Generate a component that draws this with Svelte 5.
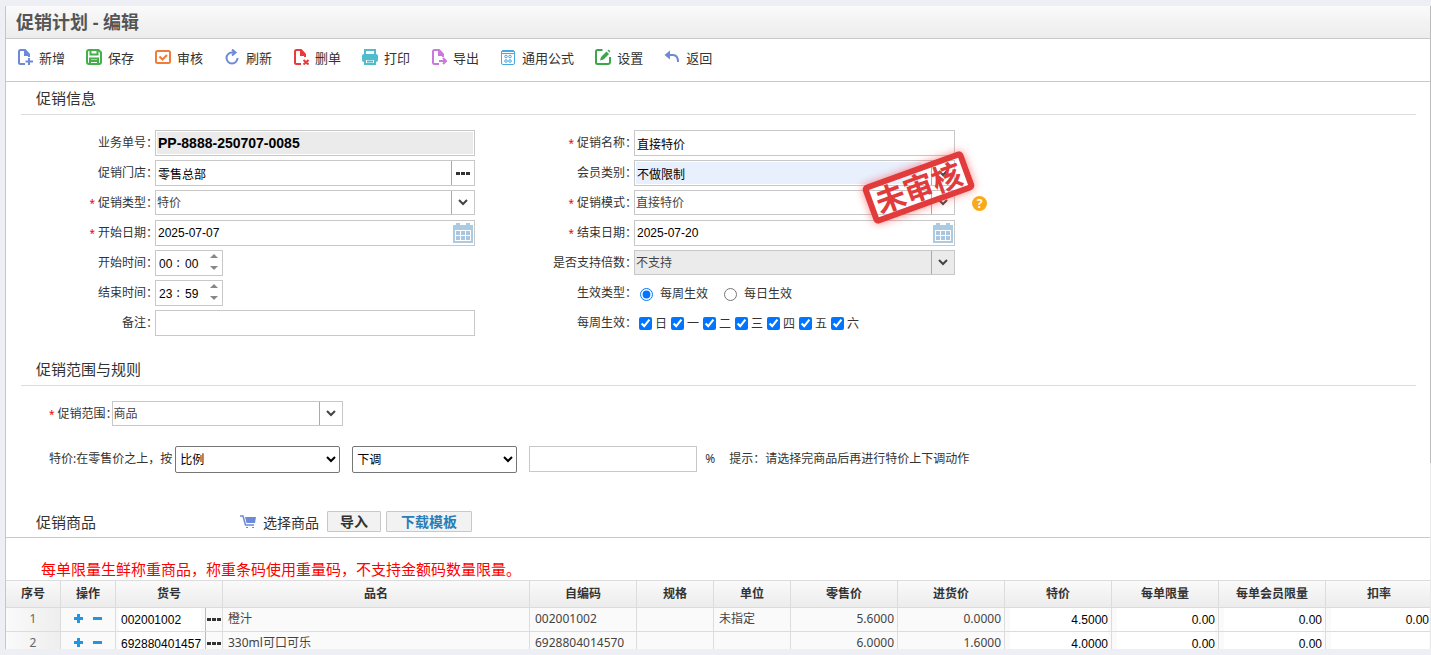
<script lang="ts">
  type Tool = { label: string; color: string; line?: string; fill?: string; width?: number };

  const tools: Tool[] = [
    { label: '新增', color: '#6d8ad8', line: 'M8 15H3.500Q2 15 2 13.500V2.500Q2 1 3.500 1H8l4 4.500V8', fill: 'M7 1h2l4 4.500V7H7zM11 9h2v2.500h3v2h-3V16h-2v-2.500H8.500v-2H11z', width: 2 },
    { label: '保存', color: '#45b04a', line: 'M1 3Q1 1 3 1h9.500L15 3.500V13q0 2-2 2H3q-2 0-2-2zM4.500 1v4.500h7V1M4 15V9.500h8V15M5 12h6', width: 2 },
    { label: '审核', color: '#ee7c3b', line: 'M2.500 2h11q1.500 0 1.500 1.500v9q0 1.500-1.500 1.500h-11Q1 14 1 12.500v-9Q1 2 2.500 2zM4.500 7.500l3 3 4.500-4.500', width: 2 },
    { label: '刷新', color: '#6d8ad8', line: 'M13.500 9a5.500 5.500 0 1 1-5.500-5.500h2.500M8 0.500l3.500 3-3.500 3', width: 2 },
    { label: '删单', color: '#e93a3c', line: 'M8 15H3.500Q2 15 2 13.500V2.500Q2 1 3.500 1H8l4 4.500V8M10.500 11l5 4.500M15.500 11l-5 4.500', fill: 'M7 1h2l4 4.500V7H7z', width: 2 },
    { label: '打印', color: '#4fbdcb', line: 'M3 5V1h10v4M3 10h10v5H3zM5 12.500h6', fill: 'M2 5h12q2 0 2 2v4q0 2-2 2h-1V9H3v4H2q-2 0-2-2V7q0-2 2-2z', width: 2 },
    { label: '导出', color: '#c978db', line: 'M8 15H3.500Q2 15 2 13.500V2.500Q2 1 3.500 1H8l4 4.500V8M8 12h6.500M12 9l3 3-3 3', fill: 'M7 1h2l4 4.500V7H7z', width: 2 },
    { label: '通用公式', color: '#46a9e2', line: 'M3 1.500h10q1.500 0 1.500 1.500v11q0 1.500-1.500 1.500H3q-1.500 0-1.500-1.500V3q0-1.500 1.500-1.500zM2 4.500h12M2 2.500h12M4.700 7.500a1.300 1.300 0 1 0 2.600 0a1.300 1.300 0 1 0-2.600 0M8.700 7.500a1.300 1.300 0 1 0 2.600 0a1.300 1.300 0 1 0-2.600 0M4.700 12a1.300 1.300 0 1 0 2.600 0a1.300 1.300 0 1 0-2.600 0M8.700 12a1.300 1.300 0 1 0 2.600 0a1.300 1.300 0 1 0-2.600 0', width: 1 },
    { label: '设置', color: '#3da64a', line: 'M7.500 1H2.500Q1 1 1 2.500v11Q1 15 2.500 15H13q2 0 2-2V8', fill: 'M11.500 2.500l2.500 2.500L8.500 10.500 5 11.500l1-3.500zM13.500 0.500l2 2-1 1-2-2z', width: 2 },
    { label: '返回', color: '#6d8ad8', line: 'M5 6h4q5 0 5 7', fill: 'M0.500 6L6 1.500v9z', width: 2 }
  ];

  const weekdays = ['日', '一', '二', '三', '四', '五', '六'];

  const columns = [
    { title: '序号', width: 55 },
    { title: '操作', width: 55 },
    { title: '货号', width: 107 },
    { title: '品名', width: 307 },
    { title: '自编码', width: 107 },
    { title: '规格', width: 77 },
    { title: '单位', width: 77 },
    { title: '零售价', width: 107 },
    { title: '进货价', width: 107 },
    { title: '特价', width: 107 },
    { title: '每单限量', width: 107 },
    { title: '每单会员限量', width: 107 },
    { title: '扣率', width: 107 }
  ];

  let rows = $state([
    { code: '002001002', name: '橙汁', selfCode: '002001002', spec: '', unit: '未指定', retail: '5.6000', cost: '0.0000', price: '4.5000', limit: '0.00', memberLimit: '0.00', rate: '0.00' },
    { code: '6928804014570', name: '330ml可口可乐', selfCode: '6928804014570', spec: '', unit: '', retail: '6.0000', cost: '1.6000', price: '4.0000', limit: '0.00', memberLimit: '0.00', rate: '' }
  ]);

  let effect = $state('week');
</script>

{#snippet arrow()}
  <svg class="arrow" viewBox="0 0 10 7" aria-hidden="true"><path d="M1 1l4 4 4-4" /></svg>
{/snippet}

{#snippet dots()}
  <svg class="dots" viewBox="0 0 14 3" aria-hidden="true"><path d="M0 0h4v3H0zM5 0h4v3H5zM10 0h4v3h-4z" /></svg>
{/snippet}

{#snippet combo(id: string, value: string, disabled = false)}
  <div class="box combo" class:disabled>
    <select {id} {disabled}><option>{value}</option></select>
    <span class="side">{@render arrow()}</span>
  </div>
{/snippet}

{#snippet dateBox(id: string, value: string)}
  <div class="box">
    <input {id} type="text" {value} />
    <button class="calendar" type="button" aria-label="选择日期">
      <svg viewBox="0 0 20 20">
        <path fill="#a9cbe6" d="M0 2h3V0h4v2h6V0h4v2h3v18H0z" />
        <path fill="#fff" d="M2 7h16v11H2z" />
        <path fill="#a9c6e0" d="M3 8h4v4H3zM8 8h4v4H8zM13 8h4v4h-4zM3 13h4v4H3zM8 13h4v4H8zM13 13h4v4h-4z" />
      </svg>
    </button>
  </div>
{/snippet}

{#snippet timeBox(id: string, hour: string, minute: string)}
  <div class="box time">
    <input {id} type="text" value={hour} />
    <span class="colon">:</span>
    <input type="text" value={minute} aria-label="分钟" />
    <span class="spin">
      <button type="button" aria-label="增加"><svg viewBox="0 0 8 4"><path d="M0 4l4-4 4 4z" /></svg></button>
      <button type="button" aria-label="减少"><svg viewBox="0 0 8 4"><path d="M0 0l4 4 4-4z" /></svg></button>
    </span>
  </div>
{/snippet}

{#snippet caption(id: string, text: string, required = false)}
  <label class="caption" for={id}>{#if required}<i>*</i>{/if}{text}：</label>
{/snippet}

<div class="page">
  <main class="panel">
    <header class="title"><h1>促销计划 - 编辑</h1></header>

    <nav class="toolbar">
      {#each tools as tool}
        <button type="button" style:color={tool.color}>
          <svg viewBox="0 0 16 16" aria-hidden="true">
            {#if tool.fill}<path d={tool.fill} fill="currentColor" />{/if}
            <path d={tool.line} fill="none" stroke="currentColor" stroke-width={tool.width} />
          </svg>
          <span>{tool.label}</span>
        </button>
      {/each}
    </nav>

    <h2 class="section">促销信息</h2>
    <form class="form">
      <div class="fields">
        {@render caption('billNo', '业务单号')}
        <div class="box disabled inset"><input id="billNo" class="bill" type="text" value="PP-8888-250707-0085" readonly /></div>
        {@render caption('shop', '促销门店')}
        <div class="box">
          <input id="shop" type="text" value="零售总部" />
          <button class="side" type="button" aria-label="选择门店">{@render dots()}</button>
        </div>
        {@render caption('kind', '促销类型', true)}
        {@render combo('kind', '特价')}
        {@render caption('startDate', '开始日期', true)}
        {@render dateBox('startDate', '2025-07-07')}
        {@render caption('startTime', '开始时间')}
        {@render timeBox('startTime', '00', '00')}
        {@render caption('endTime', '结束时间')}
        {@render timeBox('endTime', '23', '59')}
        {@render caption('remark', '备注')}
        <div class="box"><input id="remark" type="text" /></div>
      </div>

      <div class="fields right">
        {@render caption('promoName', '促销名称', true)}
        <div class="box"><input id="promoName" type="text" value="直接特价" /></div>
        {@render caption('member', '会员类别')}
        <div class="box member">
          <input id="member" type="text" value="不做限制" />
          <button class="side" type="button" aria-label="展开">{@render arrow()}</button>
        </div>
        {@render caption('mode', '促销模式', true)}
        <div class="with-help">
          {@render combo('mode', '直接特价')}
          <button class="help" type="button">?</button>
        </div>
        {@render caption('endDate', '结束日期', true)}
        {@render dateBox('endDate', '2025-07-20')}
        {@render caption('multiple', '是否支持倍数')}
        {@render combo('multiple', '不支持', true)}
        <span class="caption">生效类型：</span>
        <div class="choices radios">
          <label><input type="radio" name="effect" value="week" bind:group={effect} />每周生效</label>
          <label><input type="radio" name="effect" value="day" bind:group={effect} />每日生效</label>
        </div>
        <span class="caption">每周生效：</span>
        <div class="choices">
          {#each weekdays as day}
            <label><input type="checkbox" checked />{day}</label>
          {/each}
        </div>
        <div class="stamp">未审核</div>
      </div>
    </form>

    <h2 class="section">促销范围与规则</h2>
    <div class="rules">
      <div class="scope">
        {@render caption('scope', '促销范围', true)}
        {@render combo('scope', '商品')}
      </div>
      <div class="adjust">
        <label for="basis">特价:在零售价之上，按</label>
        <select id="basis"><option>比例</option><option>金额</option></select>
        <select aria-label="调整方向"><option>下调</option><option>上调</option></select>
        <div class="box amount"><input type="text" aria-label="调整幅度" /></div>
        <span class="percent">%</span>
        <span>提示：请选择完商品后再进行特价上下调动作</span>
      </div>
    </div>

    <div class="goods-bar">
      <h2>促销商品</h2>
      <button class="pick" type="button">
        <svg viewBox="0 0 16 14" aria-hidden="true">
          <path d="M0 1h3l2.500 9H14" fill="none" stroke="#6d8ad8" stroke-width="1.500" />
          <path d="M5 2h11l-1 6H6.500z" fill="#6d8ad8" />
          <path d="M6 12h2v1H6zM12 12h2v1h-2z" fill="#6d8ad8" />
        </svg>
        选择商品
      </button>
      <button class="btn" type="button">导入</button>
      <a class="btn link" href="#template">下载模板</a>
    </div>
    <p class="notice">每单限量生鲜称重商品，称重条码使用重量码，不支持金额码数量限量。</p>

    <div class="grid">
      <table>
        <colgroup>
          {#each columns as col}<col style:width="{col.width}px" />{/each}
        </colgroup>
        <thead>
          <tr>{#each columns as col}<th>{col.title}</th>{/each}</tr>
        </thead>
        <tbody>
          {#each rows as row, i}
            <tr>
              <td class="no">{i + 1}</td>
              <td class="ops">
                <button type="button" aria-label="添加行"><svg viewBox="0 0 9 9"><path d="M3 0h3v3h3v3H6v3H3V6H0V3h3z" /></svg></button>
                <button type="button" aria-label="删除行"><svg viewBox="0 0 9 9"><path d="M0 3h9v3H0z" /></svg></button>
              </td>
              <td class="code">
                <div>
                  <input type="text" bind:value={row.code} aria-label="货号" />
                  <button type="button" aria-label="选择货号">{@render dots()}</button>
                </div>
              </td>
              <td>{row.name}</td>
              <td>{row.selfCode}</td>
              <td>{row.spec}</td>
              <td>{row.unit}</td>
              <td class="num">{row.retail}</td>
              <td class="num">{row.cost}</td>
              <td class="edit"><input type="text" bind:value={row.price} aria-label="特价" /></td>
              <td class="edit"><input type="text" bind:value={row.limit} aria-label="每单限量" /></td>
              <td class="edit"><input type="text" bind:value={row.memberLimit} aria-label="每单会员限量" /></td>
              <td class="edit"><input type="text" bind:value={row.rate} aria-label="扣率" /></td>
            </tr>
          {/each}
        </tbody>
      </table>
    </div>
  </main>
  <div class="scroll"><div class="thumb"></div></div>
</div>

<style>
  :global(body) {
    margin: 0;
    background: #eeeff4;
  }

  .page {
    display: flex;
    height: 100vh;
    box-sizing: border-box;
    padding: 6px 0 6px 5px;
    overflow: hidden;
    font: 12px/18px 'Noto Sans', 'Noto Sans CJK SC', sans-serif;
    color: #333;
  }

  .page :is(input, select, button) {
    box-sizing: border-box;
    margin: 0;
    font-family: inherit;
    font-size: 12px;
  }

  button {
    padding: 0;
    border: 0;
    background: none;
    color: inherit;
    cursor: pointer;
  }

  svg {
    display: block;
    flex: none;
  }

  .panel {
    flex: 1;
    min-width: 0;
    overflow: hidden;
    background: #fff;
    border-left: 1px solid #c6c6c8;
  }

  .scroll {
    width: 1px;
    background: #eaeaea;
  }

  .thumb {
    height: 71%;
    background: #bbb;
  }

  h1,
  h2 {
    margin: 0;
    font-weight: normal;
  }

  .title {
    height: 32px;
    padding-left: 10px;
    border-bottom: 1px solid #c8c8c8;
    background: linear-gradient(#fafafa, #ececec);
  }

  h1 {
    font-size: 18px;
    font-weight: bold;
    line-height: 32px;
    color: #555;
  }

  .toolbar {
    display: flex;
    gap: 21px;
    height: 42px;
    padding-left: 11px;
    border-bottom: 1px solid #c8c8c8;
  }

  .toolbar button {
    display: flex;
    align-items: center;
    gap: 6px;
    height: 36px;
  }

  .toolbar svg {
    width: 16px;
    height: 16px;
  }

  .toolbar span {
    font-size: 13px;
    color: #333;
  }

  .section {
    height: 32px;
    margin: 0 14px 0 15px;
    padding-left: 15px;
    border-bottom: 1px solid #dcdcdc;
    font-size: 15px;
    line-height: 32px;
  }

  .form {
    display: flex;
    padding: 15px 0 13px;
  }

  .fields {
    position: relative;
    display: grid;
    grid-template-columns: 149px 320px;
    grid-auto-rows: 30px;
  }

  .fields.right {
    grid-template-columns: 159px 321px;
  }

  /* the full-width colon has an empty right half, which slides under the field */
  .caption {
    margin-right: -3px;
    line-height: 25px;
    text-align: right;
    white-space: nowrap;
  }

  .caption i {
    margin-right: 3px;
    font-style: normal;
    font-size: 10px;
    line-height: 1;
    color: #e00;
  }

  .box {
    position: relative;
    display: flex;
    height: 26px;
    box-sizing: border-box;
    border: 1px solid #c8c8c8;
    background: #fff;
  }

  .box input {
    flex: 1;
    min-width: 0;
    height: 24px;
    padding: 0 2px;
    border: 0;
    outline: 0;
    background: none;
    font-family: 'Liberation Sans', 'Noto Sans CJK SC', sans-serif;
    color: #000;
  }

  .box .bill {
    font-size: 14px;
    font-weight: bold;
  }

  .box.disabled {
    background: #ebebeb;
  }

  .inset {
    box-shadow: inset 0 0 0 1px #fff;
  }

  .combo {
    height: 25px;
  }

  .combo select {
    flex: 1;
    padding: 0 1px;
    border: 0;
    outline: 0;
    background: none;
    appearance: none;
    color: #444;
    opacity: 1;
  }

  .side {
    box-sizing: border-box;
    display: flex;
    align-items: center;
    justify-content: center;
    width: 23px;
    border-left: 1px solid #aaa;
  }

  .combo .side {
    pointer-events: none;
  }

  .arrow {
    width: 10px;
    height: 7px;
    fill: none;
    stroke: #444;
    stroke-width: 2;
  }

  .dots {
    width: 14px;
    height: 3px;
    fill: #333;
  }

  .calendar {
    width: 23px;
    padding: 2px;
  }

  .calendar svg {
    width: 20px;
    height: 20px;
  }

  .time {
    width: 68px;
  }

  .box.time input {
    flex: none;
    width: 18px;
    padding: 1px 0 0 3px;
  }

  .colon {
    width: 8px;
    line-height: 24px;
    text-align: center;
    color: #000;
  }

  .spin {
    display: flex;
    flex-direction: column;
    justify-content: space-between;
    margin-left: 10px;
    padding: 3px 0 5px;
  }

  .spin svg {
    width: 8px;
    height: 4px;
    fill: #888;
  }

  .member input {
    height: 22px;
    margin: 1px 10px 1px 1px;
    padding: 0 1px;
    background: #e8f0fe;
  }

  .with-help {
    position: relative;
  }

  .help {
    position: absolute;
    left: 338px;
    top: 6px;
    width: 15px;
    height: 15px;
    border-radius: 50%;
    background: #fba919;
    color: #fff;
    font-weight: bold;
    line-height: 15px;
  }

  .choices {
    display: flex;
    align-items: center;
    height: 27px;
    padding-left: 5px;
  }

  .choices label {
    display: flex;
    align-items: center;
    gap: 3px;
    width: 32px;
  }

  .choices input {
    width: 13px;
    height: 13px;
  }

  .radios {
    height: 28px;
    padding-left: 6px;
  }

  .radios label {
    gap: 7px;
    width: 84px;
  }

  .stamp {
    position: absolute;
    left: 390px;
    top: 37px;
    width: 107px;
    height: 41px;
    box-sizing: border-box;
    border: 6px solid #e23b3b;
    border-radius: 5px;
    box-shadow: 0 0 8px rgba(255, 60, 60, 0.6);
    font: bold 30px/27px 'Noto Sans CJK SC', sans-serif;
    text-align: center;
    color: #e23b3b;
    transform: rotate(-20deg);
  }

  .rules {
    padding: 15px 0 32px 43px;
  }

  .scope {
    display: flex;
    height: 25px;
    margin-bottom: 18px;
  }

  .scope .caption {
    margin-right: -6px;
  }

  .scope .combo {
    width: 231px;
  }

  .adjust {
    display: flex;
    align-items: center;
    height: 30px;
  }

  .adjust select {
    width: 165px;
    height: 27px;
    margin-right: 12px;
    padding: 0;
    border: 1px solid #767676;
    border-radius: 2px;
    background: #fff;
    color: #000;
  }

  .adjust label {
    margin-right: 3px;
  }

  .amount {
    width: 168px;
  }

  .percent {
    margin: 0 14px 0 8px;
  }

  .goods-bar {
    display: flex;
    align-items: center;
    height: 31px;
    padding-left: 30px;
    border-bottom: 1px solid #c8c8c8;
  }

  .goods-bar h2 {
    width: 204px;
    font-size: 15px;
  }

  .goods-bar .pick {
    display: flex;
    align-items: center;
    gap: 7px;
    margin-right: 8px;
    font-size: 14px;
  }

  .pick svg {
    width: 16px;
    height: 14px;
  }

  .goods-bar .btn {
    box-sizing: border-box;
    width: 54px;
    height: 21px;
    margin-right: 5px;
    border: 1px solid #c8c8c8;
    border-radius: 1px;
    background: #f2f2f2;
    font-size: 14px;
    font-weight: bold;
    line-height: 19px;
    text-align: center;
    text-decoration: none;
  }

  .goods-bar .link {
    width: 86px;
    color: #2a7db5;
  }

  .notice {
    margin: 0;
    padding: 21px 0 1px 35px;
    font-size: 15px;
    line-height: 20px;
    color: #f00;
  }

  .grid {
    overflow: hidden;
    border-top: 1px solid #dcdcdc;
  }

  table {
    width: 1427px;
    table-layout: fixed;
    border-collapse: separate;
    border-spacing: 0;
  }

  th,
  td {
    box-sizing: border-box;
    padding: 0 5px;
    border-right: 1px solid #dcdcdc;
    border-bottom: 1px solid #dcdcdc;
    white-space: nowrap;
    overflow: hidden;
  }

  th {
    height: 27px;
    background: linear-gradient(#fafafa, #ececec);
  }

  td {
    height: 24px;
    padding-bottom: 2px;
    background: #fafafa;
    color: #444;
  }

  .no {
    background: linear-gradient(90deg, #fafafa, #eee);
    text-align: center;
    color: #666;
  }

  .ops {
    text-align: center;
  }

  .ops button {
    margin: 0 3px;
  }

  .ops svg {
    width: 9px;
    height: 9px;
    fill: #2196e3;
  }

  .num {
    padding: 0 3px 2px;
    text-align: right;
  }

  .code {
    padding: 0 0 0 3px;
  }

  .code div {
    display: flex;
    height: 23px;
  }

  .code input {
    width: 82px;
    margin-right: 4px;
    padding: 1px 0 0 2px;
  }

  .code button {
    width: 17px;
    padding: 0 1px;
    border-left: 1px solid #bbb;
  }

  td input {
    border: 0;
    outline: 0;
    background: #fff;
    color: #000;
  }

  .page td input {
    font-family: 'Liberation Sans', 'Noto Sans CJK SC', sans-serif;
  }

  .edit {
    padding: 0 3px 0 5px;
  }

  .edit input {
    display: block;
    width: 100%;
    height: 23px;
    padding: 1px 0 0;
    text-align: right;
  }
</style>
